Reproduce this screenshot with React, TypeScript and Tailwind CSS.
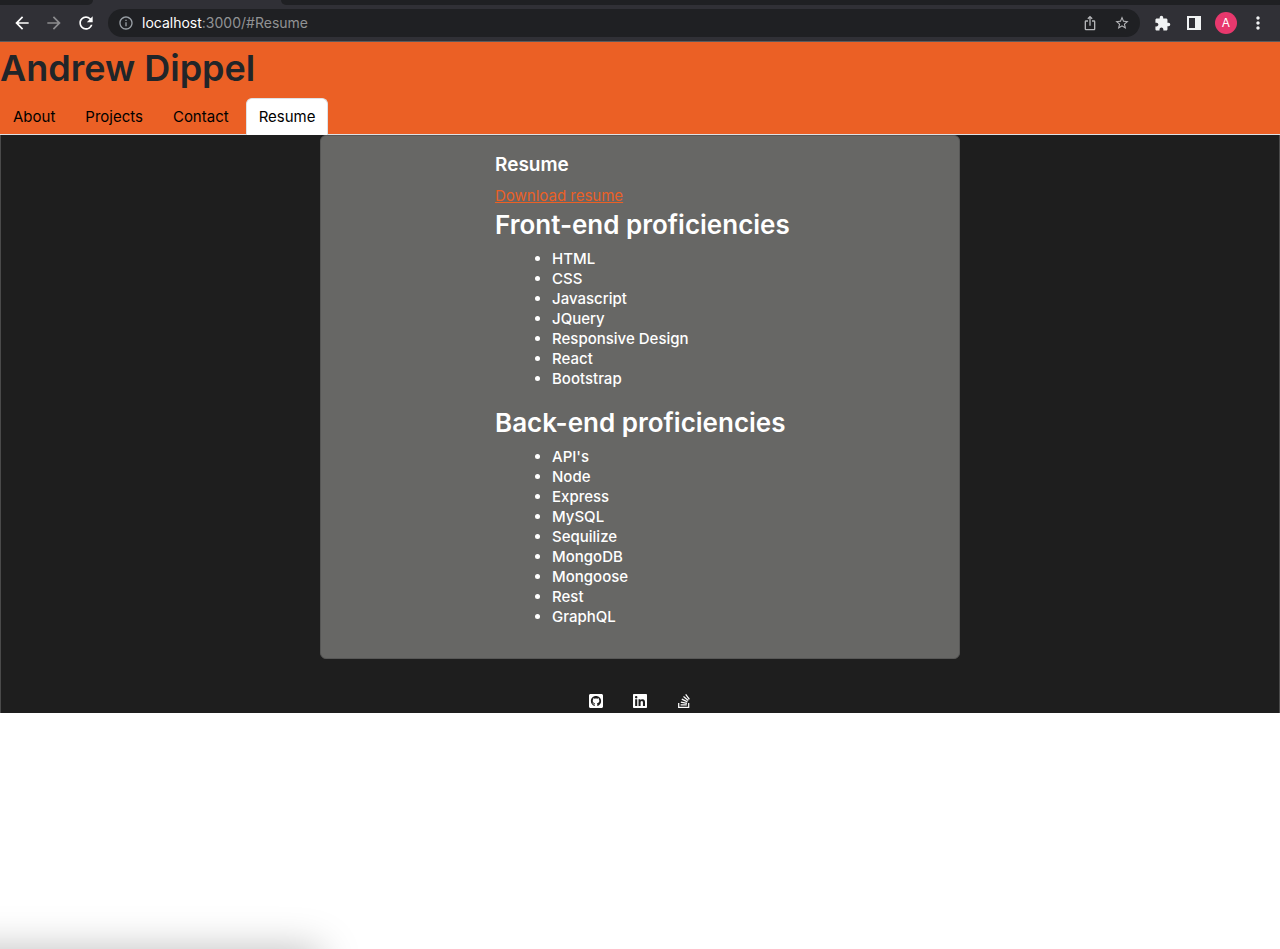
import React from "react";
import {
  MdArrowBack,
  MdArrowForward,
  MdRefresh,
  MdInfoOutline,
  MdIosShare,
  MdStarBorder,
  MdExtension,
  MdMoreVert,
} from "react-icons/md";
import { FaGithubSquare, FaLinkedin, FaStackOverflow } from "react-icons/fa";

const frontEnd = ["HTML", "CSS", "Javascript", "JQuery", "Responsive Design", "React", "Bootstrap"];
const backEnd = ["API's", "Node", "Express", "MySQL", "Sequilize", "MongoDB", "Mongoose", "Rest", "GraphQL"];
const tabs = ["About", "Projects", "Contact", "Resume"];

function BrowserBar() {
  return (
    <div className="border-b border-[#5b5b5e] bg-[#303036]">
      <div className="flex h-[5px]">
        <div className="w-[93px] rounded-br-lg bg-[#1f2023]" />
        <div className="w-[188px]" />
        <div className="flex-1 rounded-bl-lg bg-[#1f2023]" />
      </div>
      <div className="flex h-9 items-center px-3">
        <button type="button" aria-label="Back" className="mr-3 text-white">
          <MdArrowBack size={20} />
        </button>
        <button type="button" aria-label="Forward" className="mr-3 text-[#8c8c8f]">
          <MdArrowForward size={20} />
        </button>
        <button type="button" aria-label="Reload" className="mr-3 text-white">
          <MdRefresh size={20} />
        </button>
        <div className="mr-3 flex h-7 flex-1 items-center rounded-full bg-[#1f2023] px-[10px] text-[#b4b5b8]">
          <MdInfoOutline size={16} className="mr-2 text-[#9aa0a6]" />
          <div className="flex-1 text-sm leading-5 text-[#919294]">
            <span className="text-white">localhost</span>:3000/#Resume
          </div>
          <button type="button" aria-label="Share" className="mr-4">
            <MdIosShare size={16} />
          </button>
          <button type="button" aria-label="Bookmark">
            <MdStarBorder size={16} />
          </button>
        </div>
        <div className="flex items-center gap-3 text-[#f1f3f4]">
          <button type="button" aria-label="Extensions" className="flex w-5 justify-center">
            <MdExtension size={17} />
          </button>
          <button type="button" aria-label="Side panel" className="flex w-5 justify-center">
            <span className="block h-[14px] w-[14px] border-2 border-r-[6px] border-[#f1f3f4]" />
          </button>
          <button
            type="button"
            aria-label="Profile"
            className="-mx-px h-[22px] w-[22px] rounded-full bg-[#e8386d] text-xs leading-[22px] text-white"
          >
            A
          </button>
          <button type="button" aria-label="Menu" className="flex w-5 justify-center">
            <MdMoreVert size={20} />
          </button>
        </div>
      </div>
    </div>
  );
}

function Skills({ title, items }: { title: string; items: string[] }) {
  return (
    <section className="mb-[17px]">
      <h2 className="mb-[7px] text-[26px] leading-[34px] font-semibold whitespace-nowrap">{title}</h2>
      <ul className="list-disc pl-[57px]">
        {items.map((item) => (
          <li key={item} className="leading-5">
            {item}
          </li>
        ))}
      </ul>
    </section>
  );
}

export default function App() {
  return (
    <div className="flex min-h-screen flex-col bg-white font-['Inter',sans-serif] text-[15px]">
      <BrowserBar />
      <header className="border-b border-[#dee2e6] bg-[#eb6025]">
        <h1 className="pt-0.5 pb-1.5 text-[36px] leading-[48px] font-semibold text-[#212529]">Andrew Dippel</h1>
        <nav className="relative -mb-px flex gap-1">
          {tabs.map((tab) => (
            <a
              key={tab}
              href={`#${tab}`}
              className={
                tab === "Resume"
                  ? "rounded-t-md border border-b-0 border-[#dee2e6] bg-white px-3 py-1.5 leading-6 text-black"
                  : "border border-b-0 border-transparent px-3 py-1.5 leading-6 text-black"
              }
            >
              {tab}
            </a>
          ))}
        </nav>
      </header>
      <div className="bg-[#1e1e1e] shadow-[inset_1px_0_#4a4a4a,inset_-1px_0_#4a4a4a]">
        <main className="mx-auto w-1/2 rounded-md border border-[#575756] bg-[#676765] pt-[17px] pb-3.5 text-white">
          <div className="mx-auto w-[290px] font-medium">
            <h5 className="mb-[7px] text-[19px] leading-6 font-semibold">Resume</h5>
            <a href="#download" className="block leading-6 font-normal text-[#eb6025] underline">
              Download resume
            </a>
            <Skills title="Front-end proficiencies" items={frontEnd} />
            <Skills title="Back-end proficiencies" items={backEnd} />
          </div>
        </main>
        <footer className="flex justify-center gap-7 pt-[34px] pb-1 text-white">
          <a href="#github" aria-label="GitHub">
            <FaGithubSquare size={16} />
          </a>
          <a href="#linkedin" aria-label="LinkedIn">
            <FaLinkedin size={16} />
          </a>
          <a href="#stackoverflow" aria-label="Stack Overflow">
            <FaStackOverflow size={16} />
          </a>
        </footer>
      </div>
      <div className="relative flex-1 overflow-hidden">
        <div className="absolute top-full left-[-60px] h-20 w-[380px] shadow-[0_0_40px_rgba(0,0,0,0.26)]" />
      </div>
    </div>
  );
}
